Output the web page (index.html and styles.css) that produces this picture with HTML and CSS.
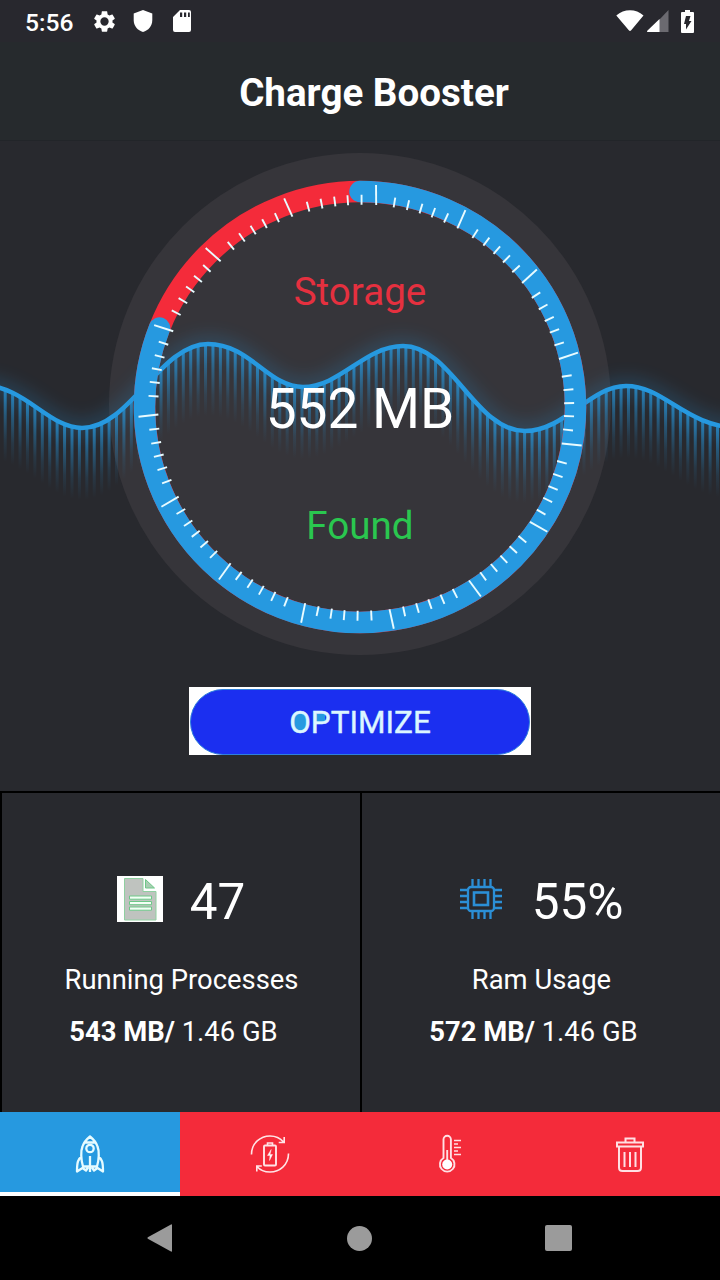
FILE: index.html
```html
<!DOCTYPE html>
<html lang="en">
<head>
  <meta charset="UTF-8" />
  <meta name="viewport" content="width=device-width, initial-scale=1.0" />
  <title>Charge Booster</title>
  <link rel="stylesheet" href="styles.css">
</head>
<body>

  <div class="statusbar">
    <span class="clock">5:56</span>
    <svg class="status-gear" width="25" height="25" viewBox="0 0 24 24">
      <path fill="#fff" fill-rule="evenodd" d="M19.6 12.9c.1-.3.1-.6.1-.9s0-.6-.1-.9l2.1-1.600c.2-.2.2-.4.1-.6l-2-3.500c-.1-.2-.4-.3-.6-.2l-2.500 1c-.5-.4-1.100-.7-1.700-1l-.4-2.600c0-.3-.2-.4-.5-.4h-4.200c-.3 0-.5.100-.5.400L9 5.200c-.6.300-1.200.6-1.700 1l-2.500-1c-.2-.1-.5 0-.6.2l-2 3.500c-.1.200-.1.500.1.600l2.100 1.600c0 .3-.1.600-.1.900s0 .6.100.900l-2.100 1.600c-.2.200-.2.400-.1.600l2 3.500c.1.200.4.300.6.200l2.500-1c.5.400 1.100.7 1.700 1l.4 2.600c0 .3.200.4.500.4h4.200c.3 0 .5-.1.500-.4l.4-2.600c.6-.3 1.200-.6 1.700-1l2.500 1c.2.100.5 0 .6-.2l2-3.500c.1-.2.1-.5-.1-.6zM12 16a4 4 0 1 1 0-8 4 4 0 0 1 0 8z"/>
    </svg>
    <svg class="status-shield" width="20" height="24" viewBox="0 0 20 24">
      <path fill="#fff" d="M10 1 19.300 4.500V11c0 6-4 10.500-9.300 12C4.700 21.500.7 17 .7 11V4.500z"/>
    </svg>
    <svg class="status-card" width="18" height="22" viewBox="0 0 18 22">
      <path fill="#fff" fill-rule="evenodd" d="M7 0h9a2 2 0 0 1 2 2v18a2 2 0 0 1-2 2H2a2 2 0 0 1-2-2V7zM7 2.500V7h2.200V2.500zm4 0V7h2.200V2.500zm4 0V7h1.800V2.500z"/>
    </svg>
    <span class="status-space"></span>
    <svg class="status-wifi" width="28" height="22" viewBox="0 0 28 22">
      <path fill="#fff" d="M.3 5.500C8-1.500 20-1.500 27.500 5.500L15.200 20.200q-1.200 1.500-2.400 0z"/>
    </svg>
    <svg class="status-signal" width="22" height="22" viewBox="0 0 22 22">
      <path fill="#6b6a70" d="M21.500 0v22H12V10z"/>
      <path fill="#fff" d="M12.500 9v13H.5q-1-.5 0-1.400z"/>
    </svg>
    <svg class="status-battery" width="13" height="23" viewBox="0 0 13 23">
      <path fill="#fff" d="M4 0h5v2h3q1 0 1 1v19q0 1-1 1H1q-1 0-1-1V3q0-1 1-1h3z"/>
      <path fill="#28282e" d="M5 6h4.500L8 11h2.500L5 19.500V14H3z"/>
    </svg>
  </div>

  <header class="titlebar">
    <h1>Charge Booster</h1>
  </header>

  <main class="booster">
    <svg class="gauge" width="720" height="650" viewBox="0 141 720 650">
      <defs>
        <linearGradient id="barFade" x1="0" y1="0" x2="0" y2="1">
          <stop offset="0" stop-color="#2699e0" stop-opacity=".75"/>
          <stop offset=".35" stop-color="#2699e0" stop-opacity=".42"/>
          <stop offset=".7" stop-color="#2699e0" stop-opacity=".13"/>
          <stop offset="1" stop-color="#2699e0" stop-opacity="0"/>
        </linearGradient>
        <filter id="glow" x="-20%" y="-60%" width="140%" height="220%">
          <feGaussianBlur stdDeviation="9"/>
        </filter>
      </defs>
      <circle cx="360" cy="404" r="251" fill="#36353a"/>
      <path class="wave-glow" filter="url(#glow)" d="M-20 385C25 385 48 428 82 428C130 428 160 344 208 344C250 344 268 387 303 387C340 387 365 346 403 346C452 346 475 431 525 431C565 431 590 386 626 386C665 386 685 427 740 428"/>
      <g id="bars" fill="url(#barFade)"></g>
      <path id="wave" class="wave" d="M-20 385C25 385 48 428 82 428C130 428 160 344 208 344C250 344 268 387 303 387C340 387 365 346 403 346C452 346 475 431 525 431C565 431 590 386 626 386C665 386 685 427 740 428"/>
      <circle class="ring ring-red" cx="360" cy="407" r="215.500"/>
      <path class="ring ring-blue" d="M360 191.500A215.500 215.500 0 1 1 159.500 328"/>
      <g id="ticks" class="ticks"></g>
    </svg>
    <div class="readout">
      <span class="readout-title">Storage</span>
      <span class="readout-value">552 MB</span>
      <span class="readout-state">Found</span>
    </div>
    <button class="optimize" type="button"><span class="optimize-pill"><span class="optimize-text">OPTIMIZE</span></span></button>
  </main>

  <section class="stats">
    <div class="stat">
      <div class="stat-head">
        <svg class="icon-doc" width="46" height="46" viewBox="0 0 46 46">
          <path fill="#fff" d="M0 0h46v46H0z"/>
          <path fill="#bfc3bf" stroke="#8fd0a0" d="M7.500 2.500H26v13h13v28.500H7.500z"/>
          <path fill="#a9cdb3" stroke="#6cc887" d="M28.500 3.500v8.500h9z"/>
          <path fill="#f4fff6" stroke="#6cc887" d="M12.500 20h22v3.200h-22zm0 5.500h22v3.200h-22zm0 5.500h22v3.200h-22z"/>
        </svg>
        <span class="stat-number">47</span>
      </div>
      <p class="stat-label">Running Processes</p>
      <p class="stat-memory"><b>543 MB/</b> 1.46 GB</p>
    </div>
    <div class="stat">
      <div class="stat-head stat-head-ram">
        <svg class="icon-chip" width="42" height="40" viewBox="0 0 42 40" fill="none" stroke="#2b8fd6" stroke-width="2.300">
          <rect x="8" y="8" width="26" height="24" rx="3"/>
          <rect x="14" y="13.500" width="14" height="12.500" stroke-width="2.600"/>
          <path d="M12.500 0v8M18.500 0v8M24.500 0v8M30.500 0v8M12.500 32v8M18.500 32v8M24.500 32v8M30.500 32v8M0 11h8M0 17h8M0 23h8M0 29h8M34 11h8M34 17h8M34 23h8M34 29h8"/>
        </svg>
        <span class="stat-number">55%</span>
      </div>
      <p class="stat-label">Ram Usage</p>
      <p class="stat-memory"><b>572 MB/</b> 1.46 GB</p>
    </div>
  </section>

  <nav class="tabs">
    <div class="tab tab-active">
      <svg width="40" height="40" viewBox="0 0 40 40" fill="none" stroke="#e6fbff" stroke-width="2.300" stroke-linejoin="round">
        <path d="M13 32.500C11 26 10.500 17 12.500 12.500C14 8 17 5 20 2.500C23 5 26 8 27.500 12.500C29.500 17 29 26 27 32.500zM15 8.500h10M20 22v16M11.800 22.500C8 25 7 28 7 37.500L12.500 34L16 36.500L18 33.500M28.200 22.500C32 25 33 28 33 37.500L27.500 34L24 36.500L22 33.500"/>
        <circle cx="20" cy="14.500" r="3.700"/>
      </svg>
    </div>
    <div class="tab">
      <svg width="40" height="40" viewBox="0 0 40 40" fill="none" stroke="#ffe4e6" stroke-width="1.600">
        <path d="M1.500 20.500C1.500 9 10.500 2 20 2C26 2 30.500 4.500 33.500 8M34.200 3v5.500h-5.500M38.500 19.500C38.500 31 29.500 38 20 38C14 38 9.500 35.500 7 32.500M6.800 37.500V32h5"/>
        <rect x="14" y="11.500" width="12" height="20" rx="1" stroke-width="1.900"/>
        <path d="M17.500 11V9h5v2"/>
        <path fill="#fff" stroke-width=".5" d="M21.200 15.500 17.500 21.500h2.500L19.500 26.500l3-6h-2.500z"/>
      </svg>
    </div>
    <div class="tab">
      <svg width="40" height="40" viewBox="0 0 40 40" fill="none" stroke="#ffe0e4" stroke-width="1.900">
        <path d="M13.500 24V5.500a3.700 3.700 0 0 1 7.400 0V24a7.300 7.300 0 1 1-7.400 0z"/>
        <path d="M17.200 16v12"/>
        <circle cx="17.200" cy="30.500" r="5" fill="#fff" stroke="none"/>
        <path stroke-width="1.600" d="M24 6.500h7M24 10h4M24 13.500h7M24 17h4M24 20.500h7"/>
      </svg>
    </div>
    <div class="tab">
      <svg width="40" height="40" viewBox="0 0 40 40" fill="none" stroke="#ffdfe3" stroke-width="2">
        <path d="M7 8.500h26v4H7zM15.500 8V4.500h9V8M9 13v20.500q0 3.500 3.500 3.500h15q3.500 0 3.500-3.500V13M14.500 18v15M20 18v15M25.500 18v15"/>
      </svg>
    </div>
  </nav>

  <footer class="navbar">
    <svg width="26" height="30" viewBox="0 0 26 30"><path fill="#9b9b9b" d="M25 2v26q0 1-1 .5L.8 15.700q-.8-.7 0-1.400L24 1.500q1-.5 1 .5z"/></svg>
    <span class="nav-home"></span>
    <span class="nav-recent"></span>
  </footer>

  <script src="script.js"></script>
</body>
</html>
```

FILE: styles.css
```css
:root {
  --blue: #2699e0;
  --red: #f42b3a;
  --green: #2ac74f;
  --bg: #28292e;
}

* {
  box-sizing: border-box;
}

body {
  margin: 0;
  width: 720px;
  height: 1280px;
  overflow: hidden;
  display: flex;
  flex-direction: column;
  background: var(--bg);
  color: #fff;
  font-family: Roboto, "Liberation Sans", sans-serif;
}

/* Android status bar */
.statusbar {
  height: 42px;
  padding: 0 26px 0 25px;
  display: flex;
  align-items: center;
  background: #28282e;
}

.clock {
  width: 67px;
  font-size: 24.6px;
  font-weight: 500;
  padding-top: 2px;
}

.status-shield {
  margin-left: 16px;
}

.status-card {
  margin-left: 20px;
}

.status-space {
  flex: 1;
}

.status-wifi {
  margin-right: 2px;
}

.status-signal {
  margin-left: 1px;
}

.status-battery {
  margin-left: 12px;
}

.titlebar {
  height: 99px;
  padding-left: 28px;
  display: flex;
  align-items: center;
  justify-content: center;
  background: #262a2d;
  border-bottom: 1px solid #222529;
}

.titlebar h1 {
  margin: 0;
  padding-top: 3px;
  font-size: 38.6px;
  font-weight: 700;
}

/* Gauge, readout and the optimize button */
.booster {
  position: relative;
  height: 650px;
  padding-top: 127px;
  display: flex;
  flex-direction: column;
  align-items: center;
}

.gauge {
  position: absolute;
  top: 0;
  left: 0;
}

.wave,
.wave-glow,
.ring {
  fill: none;
  stroke: var(--blue);
}

.wave {
  stroke-width: 4.5;
}

.wave-glow {
  stroke-width: 14;
  opacity: 0.25;
}

.ring {
  stroke-width: 21.5;
  stroke-linecap: round;
}

.ring-red {
  stroke: var(--red);
}

.ticks {
  stroke: #e8fbff;
  stroke-width: 1.9;
}

.readout {
  position: relative;
  height: 419px;
  display: flex;
  flex-direction: column;
  align-items: center;
}

.readout-title,
.readout-state {
  font-size: 38.6px;
  line-height: 48px;
}

.readout-title {
  color: #e5303f;
}

.readout-value {
  margin: 60px 0 53px;
  font-size: 55px;
  line-height: 66px;
}

.readout-state {
  margin-top: 7px;
  color: var(--green);
}

.optimize {
  position: relative;
  width: 342px;
  height: 68px;
  padding: 2px 1px 0;
  border: 0;
  background: #fff;
  color: #dcf6ff;
  font: 400 31.5px/66px Roboto, "Liberation Sans", sans-serif;
  -webkit-text-stroke: 0.4px #dcf6ff;
}

.optimize-pill {
  display: block;
  height: 66px;
  border: 1px solid #2e80dc;
  border-radius: 33px;
  background: #1b2ff0;
  line-height: 66px;
}

/* light blue counters behind the O and P */
.optimize-text {
  background:
    radial-gradient(ellipse 8px 10px at 10px 50%, var(--blue) 95%, transparent) no-repeat,
    linear-gradient(var(--blue), var(--blue)) 26px 10px / 10px 9px no-repeat;
}

/* Process and RAM cells */
.stats {
  height: 321px;
  display: grid;
  grid-template-columns: 1fr 1fr;
  border-top: 2px solid #000;
}

.stat {
  border-left: 2px solid #000;
  padding-top: 83px;
  display: flex;
  flex-direction: column;
  align-items: center;
}

.stat-head {
  height: 50px;
  display: flex;
  align-items: center;
  gap: 27px;
}

.stat-head-ram {
  gap: 30px;
  padding-left: 1px;
}

.stat-head svg {
  margin-bottom: 4px;
}

.stat-number {
  padding-top: 2px;
  font-size: 49.4px;
  line-height: 50px;
}

.stat-label,
.stat-memory {
  margin: 0;
  font-size: 27.4px;
  line-height: 34px;
}

.stat-label {
  margin-top: 37px;
  padding-left: 1px;
}

.stat-memory {
  margin-top: 18px;
  padding-right: 15px;
}

/* Bottom tabs */
.tabs {
  height: 84px;
  display: flex;
}

.tab {
  flex: 1;
  display: flex;
  align-items: center;
  justify-content: center;
  background: var(--red);
}

.tab-active {
  padding-top: 4px;
  background: var(--blue);
  border-bottom: 4px solid #fff;
}

.navbar {
  height: 84px;
  padding: 0 148px 0 147px;
  display: flex;
  align-items: center;
  justify-content: space-between;
  background: #000;
}

.nav-home {
  width: 25px;
  height: 25px;
  border-radius: 50%;
  background: #9b9b9b;
}

.nav-recent {
  width: 27px;
  height: 26px;
  border-radius: 2px;
  background: #9b9b9b;
}
```

FILE: script.js
```js
const SVG_NS = 'http://www.w3.org/2000/svg';

function add(parent, name, attrs) {
  const el = document.createElementNS(SVG_NS, name);
  for (const key in attrs) el.setAttribute(key, attrs[key]);
  parent.appendChild(el);
}

// Vertical bars hanging from the wave
const wave = document.getElementById('wave');
const bars = document.getElementById('bars');
const total = wave.getTotalLength();
let pos = 0;

for (let x = 5.2; x < 720; x += 7.42) {
  let point = wave.getPointAtLength(pos);
  while (point.x < x && pos < total) {
    pos += 0.5;
    point = wave.getPointAtLength(pos);
  }
  add(bars, 'rect', { x: x - 1.5, y: point.y, width: 3, height: 72 });
}

// 15 long ticks with 5 short ones after each
const ticks = document.getElementById('ticks');

for (let i = 0; i < 15; i++) {
  const angle = 3.9 + i * 24;
  add(ticks, 'path', {
    d: 'M0 -10V10',
    transform: `translate(361.6 407.8) rotate(${angle}) translate(0 -213.3) rotate(-4.3)`
  });
  [5.3, 9.1, 12.8, 16.4, 20.2].forEach(offset => {
    add(ticks, 'path', {
      d: 'M0 -5V5',
      transform: `translate(361.2 407.8) rotate(${angle + offset}) translate(0 -208)`
    });
  });
}
```
